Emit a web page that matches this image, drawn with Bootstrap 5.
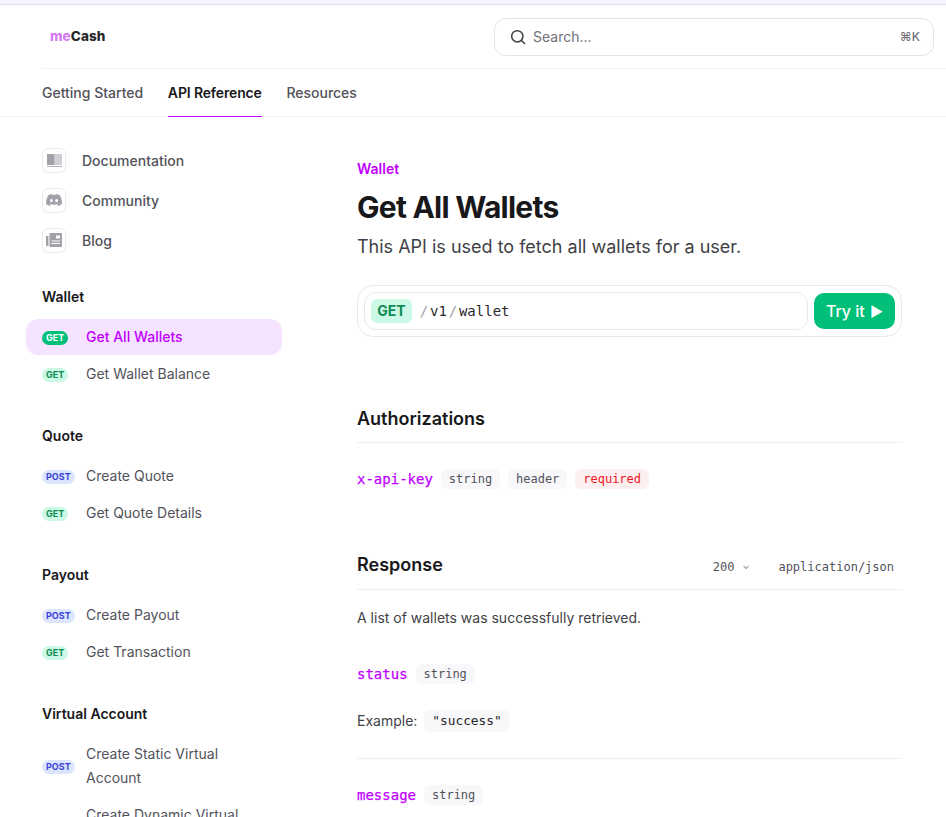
<!DOCTYPE html>
<html lang="en">
<head>
    <meta charset="UTF-8">
    <meta name="viewport" content="width=device-width, initial-scale=1.0">
    <title>Get All Wallets - meCash</title>
    <link href="https://cdn.jsdelivr.net/npm/bootstrap@5.3.0/dist/css/bootstrap.min.css" rel="stylesheet">
    <style>
        html, body { height: 817px; overflow: hidden; }
        body { font-family: Inter, "Liberation Sans", sans-serif; color: #3f3f46; background: #fff; }
        .mono { font-family: "DejaVu Sans Mono", "Liberation Mono", monospace; }
        .top-strip { height: 5px; background: #f5f3ff; border-bottom: 1px solid #e2e0ef; }
        .head-row { height: 64px; margin-left: 42px; padding-right: 12px; border-bottom: 1px solid #f2f2f3; }
        .brand { margin-left: 8px; font-size: 13.5px; font-weight: 800; letter-spacing: .1px; color: #27272a; }
        .brand span { color: #d678f2; }
        .search-box { width: 440px; height: 38px; margin-top: 13px; padding: 0 13px 1px 15px; border: 1px solid #e4e4e7; border-radius: 12px; font-size: 14px; color: #71717a; }
        .search-label { margin-left: 7px; }
        .kbd-hint { font-size: 12px; font-weight: 500; }
        .tab-row { height: 48px; padding-left: 42px; gap: 24.7px; border-bottom: 1px solid #f2f2f3; }
        .tab-link { display: flex; align-items: center; height: 48px; font-size: 14px; font-weight: 500; color: #52525b; text-decoration: none; border-bottom: 1px solid transparent; }
        .tab-link.active { color: #18181b; font-weight: 600; letter-spacing: -.15px; border-bottom-color: #c000ff; }
        .side-col { width: 357px; flex: none; padding: 31px 0 0 26px; }
        .side-link { height: 24px; margin: 0 0 16px 16px; gap: 16px; font-size: 14px; font-weight: 500; color: #52525b; }
        .side-icon { width: 24px; height: 25px; border: 1px solid #ececee; border-radius: 6px; }
        .group-title { height: 20px; line-height: 20px; margin: 0 0 12px 16px; font-size: 14px; font-weight: 600; color: #18181b; }
        .side-group { margin-bottom: 34px; width: 256px; }
        .side-links-first { margin-bottom: 35px; }
        .side-item { display: flex; align-items: center; margin-bottom: 1px; padding: 6px 16px; border-radius: 12px; font-size: 14px; line-height: 24px; color: #52525b; }
        .side-item.active { background: #f5e3ff; color: #c000ff; font-weight: 500; }
        .verb { flex: none; width: 44px; }
        .verb span { display: inline-block; padding: 0 4px; height: 14px; line-height: 14px; border-radius: 7px; font-size: 9px; font-weight: 700; vertical-align: middle; }
        .verb-get { background: #cbf9e5; color: #0f8a54; }
        .verb-get-on { background: #00bf78; color: #fff; }
        .verb-post { background: #dbe6fe; color: #3b41d8; }
        .main-col { width: 545px; flex: none; padding-top: 42px; }
        .eyebrow { font-size: 14px; line-height: 20px; font-weight: 600; color: #c000ff; }
        .page-title { margin: 10px 0 0; font-size: 30px; line-height: 36px; font-weight: 700; letter-spacing: -.75px; color: #18181b; }
        .page-sub { margin: 8px 0 0; font-size: 18px; line-height: 28px; color: #3f3f46; }
        .endpoint { height: 52px; margin-top: 24px; padding: 6px; border: 1px solid #e9e9eb; border-radius: 16px; gap: 6px; }
        .endpoint-path { flex: 1; height: 38px; padding: 0 6px; gap: 1.8px; border: 1px solid #e9e9eb; border-radius: 12px; font-size: 14px; color: #27272a; }
        .verb-big { width: 41px; text-align: center; height: 24px; line-height: 24px; border-radius: 6px; background: #cbf9e5; color: #0f8a54; font-family: Inter, "Liberation Sans", sans-serif; font-size: 14px; font-weight: 700; margin-right: 6px; }
        .slash { color: #a1a1aa; }
        .try-btn { height: 36px; width: 81px; padding: 0; border: 0; border-radius: 10px; background: #00bf78; color: #fff; font-size: 16px; font-weight: 500; }
        .try-btn:hover { background: #00bf78; color: #fff; }
        .play-mark { font-size: 14px; margin-left: 1px; }
        .sect-head { padding-bottom: 12px; border-bottom: 1px solid #eeeeef; }
        .sect-auth { margin-top: 68px; height: 38px; }
        .sect-resp { margin-top: 62px; height: 39px; }
        .sect-title { margin: 0; font-size: 18px; line-height: 28px; font-weight: 600; color: #18181b; }
        .field-row { gap: 8px; height: 20px; font-size: 14px; }
        .field-name { color: #c000ff; -webkit-text-stroke: .25px #c000ff; }
        .auth-row { margin-top: 26px; }
        .status-row { margin-top: 36px; }
        .example-row { margin-top: 26px; gap: 7px; font-size: 14px; line-height: 20px; }
        .message-row { margin-top: 26px; }
        .chip { padding: 0 8px; height: 20px; line-height: 20px; border-radius: 6px; background: #f8f7fa; font-size: 12px; letter-spacing: -.02px; color: #52525b; }
        .chip-red { background: #fef0f0; color: #f0141e; }
        .resp-meta { font-size: 12px; color: #52525b; padding-top: 7px; padding-right: 8px; }
        .resp-type { margin-left: 28px; }
        .resp-text { margin: 18px 0 0; font-size: 14px; line-height: 20px; }
        .example-chip { padding: 0 8px; height: 22px; line-height: 22px; border-radius: 6px; background: #f8f7fa; font-size: 12.8px; color: #27272a; }
        .field-divider { margin-top: 26px; border-top: 1px solid #eeeeef; }
    </style>
</head>
<body>
    <div class="top-strip"></div>

    <header class="head-row d-flex justify-content-between">
        <div class="brand d-flex align-items-center"><span>me</span>Cash</div>
        <div class="search-box d-flex align-items-center">
            <svg width="16" height="16" viewBox="0 0 16 16" fill="none" stroke="#3f3f46" stroke-width="1.5" stroke-linecap="round"><circle cx="7.3" cy="7.3" r="5.6"/><path d="M11.5 11.5 14.5 14.5"/></svg>
            <span class="search-label">Search...</span>
            <span class="kbd-hint ms-auto">⌘K</span>
        </div>
    </header>

    <nav class="tab-row d-flex">
        <a class="tab-link" href="#">Getting Started</a>
        <a class="tab-link active" href="#">API Reference</a>
        <a class="tab-link" href="#">Resources</a>
    </nav>

    <div class="d-flex">
        <aside class="side-col">
            <div class="side-links-first">
                <div class="side-link d-flex align-items-center">
                    <div class="side-icon d-flex align-items-center justify-content-center">
                        <svg width="17" height="15" viewBox="0 0 17 15" fill="#a1a1aa"><path d="M1 1h6.500c.6 0 1 .4 1 1v10H1z"/><path d="M8.500 2c0-.6.4-1 1-1H16v11H8.500z" opacity=".5"/><path d="M1 13.200h15v.8H1z"/></svg>
                    </div>
                    Documentation
                </div>
                <div class="side-link d-flex align-items-center">
                    <div class="side-icon d-flex align-items-center justify-content-center">
                        <svg width="16" height="12" viewBox="0 0 16 12" fill="#a1a1aa"><path d="M13.500 1A13 13 0 0 0 10.300 0l-.4.8a12 12 0 0 0-3.800 0L5.700 0a13 13 0 0 0-3.200 1C.5 4-.1 7 .1 10a13 13 0 0 0 4 2l.8-1.300-1.300-.6.300-.3a9.300 9.300 0 0 0 8.200 0l.3.300-1.300.6.800 1.300a13 13 0 0 0 4-2c.3-3.500-.6-6.500-2.400-9zM5.400 8.200c-.8 0-1.400-.7-1.400-1.600S4.600 5 5.400 5s1.500.7 1.400 1.600c0 .9-.6 1.600-1.400 1.600zm5.200 0c-.8 0-1.400-.7-1.400-1.600S9.800 5 10.600 5s1.500.7 1.400 1.600c0 .9-.6 1.600-1.400 1.600z"/></svg>
                    </div>
                    Community
                </div>
                <div class="side-link d-flex align-items-center">
                    <div class="side-icon d-flex align-items-center justify-content-center">
                        <svg width="16" height="14" viewBox="0 0 16 14" fill="#a1a1aa"><path d="M0 3h2.500v10H1a1 1 0 0 1-1-1z"/><path fill-rule="evenodd" d="M3.500 1a1 1 0 0 1 1-1H15a1 1 0 0 1 1 1v12a1 1 0 0 1-1 1H3.500zM10 2.500v3h4v-3zM5.500 7.500v1h8.500v-1zm0 2.500v1h8.500v-1z"/></svg>
                    </div>
                    Blog
                </div>
            </div>

            <div class="side-group">
                <div class="group-title">Wallet</div>
                <div class="side-item active"><div class="verb"><span class="verb-get-on">GET</span></div>Get All Wallets</div>
                <div class="side-item"><div class="verb"><span class="verb-get">GET</span></div>Get Wallet Balance</div>
            </div>
            <div class="side-group">
                <div class="group-title">Quote</div>
                <div class="side-item"><div class="verb"><span class="verb-post">POST</span></div>Create Quote</div>
                <div class="side-item"><div class="verb"><span class="verb-get">GET</span></div>Get Quote Details</div>
            </div>
            <div class="side-group">
                <div class="group-title">Payout</div>
                <div class="side-item"><div class="verb"><span class="verb-post">POST</span></div>Create Payout</div>
                <div class="side-item"><div class="verb"><span class="verb-get">GET</span></div>Get Transaction</div>
            </div>
            <div class="side-group">
                <div class="group-title">Virtual Account</div>
                <div class="side-item"><div class="verb"><span class="verb-post">POST</span></div><div>Create Static Virtual Account</div></div>
                <div class="side-item"><div class="verb"><span class="verb-post">POST</span></div><div>Create Dynamic Virtual Account</div></div>
            </div>
        </aside>

        <main class="main-col">
            <div class="eyebrow">Wallet</div>
            <h1 class="page-title">Get All Wallets</h1>
            <p class="page-sub">This API is used to fetch all wallets for a user.</p>

            <div class="endpoint d-flex align-items-center">
                <div class="endpoint-path mono d-flex align-items-center">
                    <span class="verb-big">GET</span>
                    <span class="slash">/</span><span>v1</span><span class="slash">/</span><span>wallet</span>
                </div>
                <button class="btn try-btn" type="button">Try it <span class="play-mark">▶</span></button>
            </div>

            <div class="sect-head sect-auth"><h2 class="sect-title">Authorizations</h2></div>
            <div class="field-row d-flex align-items-center mono auth-row">
                <span class="field-name">x-api-key</span>
                <span class="chip">string</span>
                <span class="chip">header</span>
                <span class="chip chip-red">required</span>
            </div>

            <div class="sect-head d-flex justify-content-between align-items-start sect-resp">
                <h2 class="sect-title">Response</h2>
                <div class="resp-meta mono d-flex align-items-center">
                    <span>200</span>
                    <svg class="ms-2" width="8" height="8" viewBox="0 0 8 8" fill="none" stroke="#a1a1aa" stroke-width="1.100"><path d="M1.500 3 4 5.500 6.500 3"/></svg>
                    <span class="resp-type">application/json</span>
                </div>
            </div>
            <p class="resp-text">A list of wallets was successfully retrieved.</p>

            <div class="field-row d-flex align-items-center mono status-row">
                <span class="field-name">status</span>
                <span class="chip">string</span>
            </div>
            <div class="d-flex align-items-center example-row">
                <span>Example:</span><span class="example-chip mono">"success"</span>
            </div>
            <div class="field-divider"></div>
            <div class="field-row d-flex align-items-center mono message-row">
                <span class="field-name">message</span>
                <span class="chip">string</span>
            </div>
        </main>
    </div>

    <script src="https://cdn.jsdelivr.net/npm/bootstrap@5.3.0/dist/js/bootstrap.bundle.min.js"></script>
</body>
</html>
